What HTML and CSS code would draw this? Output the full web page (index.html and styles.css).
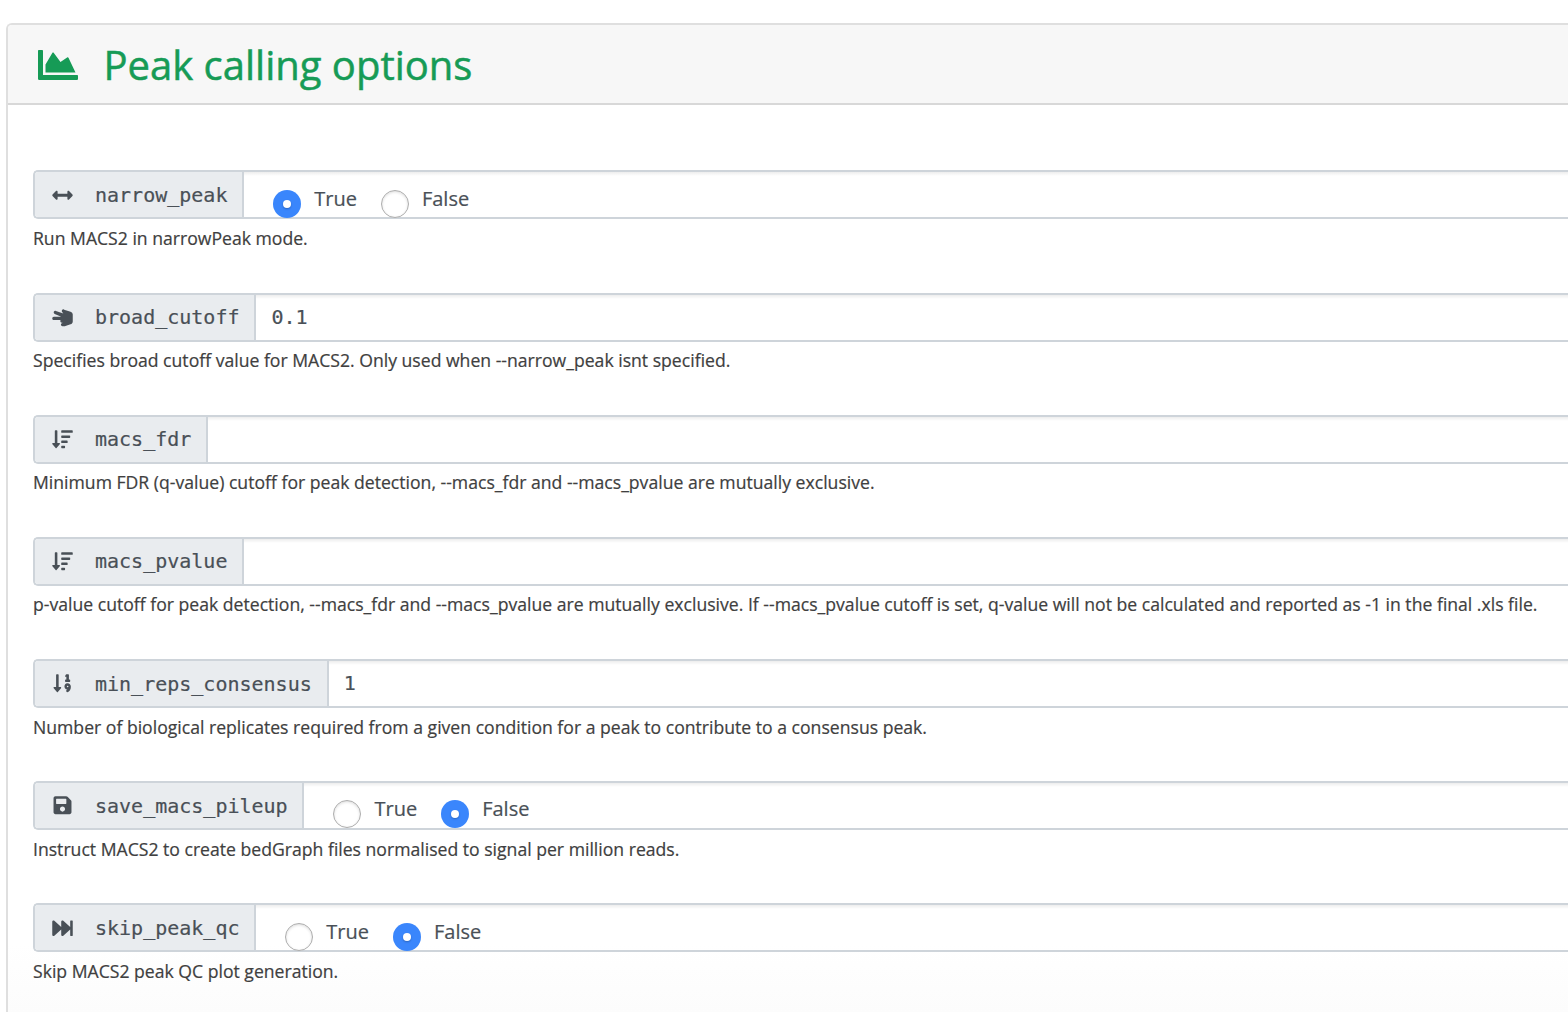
FILE: index.html
```html
<!DOCTYPE html>
<html lang="en">
<head>
<meta charset="utf-8">
<title>Peak calling options</title>
<link rel="stylesheet" href="styles.css">
</head>
<body>
<section class="card">
  <h2 class="card-header">
    <svg class="icon-title" viewBox="0 0 512 512"><path d="M500 384c6.6 0 12 5.4 12 12v40c0 6.6-5.4 12-12 12H12c-6.6 0-12-5.4-12-12V76c0-6.6 5.4-12 12-12h40c6.6 0 12 5.4 12 12v308h436zM372.7 159.5L288 216l-85.3-113.7c-5.1-6.8-15.5-6.3-19.9 1L96 248v104h384l-89.9-187.8c-3.2-6.5-11.4-8.7-17.4-4.7z"/></svg>
    <span>Peak calling options</span>
  </h2>
  <div class="card-body">
    <div class="form-group">
      <div class="input-group">
        <label class="addon"><svg class="icon" viewBox="0 0 512 512"><path d="M377.941 169.941V216H134.059v-46.059c0-21.382-25.851-32.09-40.971-16.971L7.029 239.029c-9.373 9.373-9.373 24.568 0 33.941l86.059 86.059c15.119 15.119 40.971 4.411 40.971-16.971V296h243.882v46.059c0 21.382 25.851 32.09 40.971 16.971l86.059-86.059c9.373-9.373 9.373-24.568 0-33.941l-86.059-86.059c-15.119-15.12-40.971-4.412-40.971 16.97z"/></svg><span>narrow_peak</span></label>
        <div class="control radios">
          <label class="radio"><i class="dot checked"></i><span>True</span></label>
          <label class="radio"><i class="dot"></i><span>False</span></label>
        </div>
      </div>
      <p class="help">Run MACS2 in narrowPeak mode.</p>
    </div>
    <div class="form-group">
      <div class="input-group">
        <label class="addon"><svg class="icon" viewBox="0 0 512 512"><path d="M216 440c0-22 18-40 40-40v-8h-16c-22 0-40-18-40-40 0-10 3-20 10-27H40c-22 0-40-18-40-40s18-40 40-40h172v-10L62 173c-21-8-31-31-23-52s31-31 52-23l186 64-30-38c-14-17-11-42 6-56s42-11 56 6l28 10 120 34c32 9 55 38 55 71v171c0 33-22 62-54 70l-130 45c-8 3-16 5-24 5h-48c-22 0-40-18-40-40z"/></svg><span>broad_cutoff</span></label>
        <div class="control value">0.1</div>
      </div>
      <p class="help">Specifies broad cutoff value for MACS2. Only used when --narrow_peak isnt specified.</p>
    </div>
    <div class="form-group">
      <div class="input-group">
        <label class="addon"><svg class="icon" viewBox="0 0 512 512"><path d="M304 416h-64a16 16 0 0 0-16 16v32a16 16 0 0 0 16 16h64a16 16 0 0 0 16-16v-32a16 16 0 0 0-16-16zm-128-64h-48V48a16 16 0 0 0-16-16H80a16 16 0 0 0-16 16v304H16c-14.19 0-21.37 17.24-11.29 27.31l80 96a16 16 0 0 0 22.62 0l80-96C197.35 369.26 190.22 352 176 352zm256-192H240a16 16 0 0 0-16 16v32a16 16 0 0 0 16 16h192a16 16 0 0 0 16-16v-32a16 16 0 0 0-16-16zm-64 128H240a16 16 0 0 0-16 16v32a16 16 0 0 0 16 16h128a16 16 0 0 0 16-16v-32a16 16 0 0 0-16-16zM496 32H240a16 16 0 0 0-16 16v32a16 16 0 0 0 16 16h256a16 16 0 0 0 16-16V48a16 16 0 0 0-16-16z"/></svg><span>macs_fdr</span></label>
        <div class="control value"></div>
      </div>
      <p class="help">Minimum FDR (q-value) cutoff for peak detection, --macs_fdr and --macs_pvalue are mutually exclusive.</p>
    </div>
    <div class="form-group">
      <div class="input-group">
        <label class="addon"><svg class="icon" viewBox="0 0 512 512"><path d="M304 416h-64a16 16 0 0 0-16 16v32a16 16 0 0 0 16 16h64a16 16 0 0 0 16-16v-32a16 16 0 0 0-16-16zm-128-64h-48V48a16 16 0 0 0-16-16H80a16 16 0 0 0-16 16v304H16c-14.19 0-21.37 17.24-11.29 27.31l80 96a16 16 0 0 0 22.62 0l80-96C197.35 369.26 190.22 352 176 352zm256-192H240a16 16 0 0 0-16 16v32a16 16 0 0 0 16 16h192a16 16 0 0 0 16-16v-32a16 16 0 0 0-16-16zm-64 128H240a16 16 0 0 0-16 16v32a16 16 0 0 0 16 16h128a16 16 0 0 0 16-16v-32a16 16 0 0 0-16-16zM496 32H240a16 16 0 0 0-16 16v32a16 16 0 0 0 16 16h256a16 16 0 0 0 16-16V48a16 16 0 0 0-16-16z"/></svg><span>macs_pvalue</span></label>
        <div class="control value"></div>
      </div>
      <p class="help">p-value cutoff for peak detection, --macs_fdr and --macs_pvalue are mutually exclusive. If --macs_pvalue cutoff is set, q-value will not be calculated and reported as -1 in the final .xls file.</p>
    </div>
    <div class="form-group">
      <div class="input-group">
        <label class="addon"><svg class="icon" viewBox="-32 0 512 512"><path d="M304 96h16v64h-16a16 16 0 0 0-16 16v32a16 16 0 0 0 16 16h96a16 16 0 0 0 16-16v-32a16 16 0 0 0-16-16h-16V48a16 16 0 0 0-16-16h-48a16 16 0 0 0-14.29 8.83l-16 32A16 16 0 0 0 304 96zm26.15 162.91a79 79 0 0 0-55 54.17c-14.25 51.05 21.21 97.77 68.85 102.53a84.07 84.07 0 0 1-20.85 12.91c-7.57 3.4-10.8 12.47-8.18 20.34l9.9 20c2.87 8.63 12.53 13.49 20.9 9.91 58-24.76 86.25-61.61 86.25-132V336c-.02-51.21-48.4-91.34-101.85-77.09zM352 356a20 20 0 1 1 20-20 20 20 0 0 1-20 20zM176 352h-48V48a16 16 0 0 0-16-16H80a16 16 0 0 0-16 16v304H16c-14.19 0-21.37 17.24-11.29 27.31l80 96a16 16 0 0 0 22.62 0l80-96C197.35 369.26 190.22 352 176 352z"/></svg><span>min_reps_consensus</span></label>
        <div class="control value">1</div>
      </div>
      <p class="help">Number of biological replicates required from a given condition for a peak to contribute to a consensus peak.</p>
    </div>
    <div class="form-group">
      <div class="input-group">
        <label class="addon"><svg class="icon" viewBox="-32 0 512 512"><path d="M433.941 129.941l-83.882-83.882A48 48 0 0 0 316.118 32H48C21.49 32 0 53.49 0 80v352c0 26.51 21.49 48 48 48h352c26.51 0 48-21.49 48-48V163.882a48 48 0 0 0-14.059-33.941zM224 416c-35.346 0-64-28.654-64-64 0-35.346 28.654-64 64-64s64 28.654 64 64c0 35.346-28.654 64-64 64zm96-304.52V212c0 6.627-5.373 12-12 12H76c-6.627 0-12-5.373-12-12V108c0-6.627 5.373-12 12-12h228.52c3.183 0 6.235 1.264 8.485 3.515l3.48 3.48A11.996 11.996 0 0 1 320 111.48z"/></svg><span>save_macs_pileup</span></label>
        <div class="control radios">
          <label class="radio"><i class="dot"></i><span>True</span></label>
          <label class="radio"><i class="dot checked"></i><span>False</span></label>
        </div>
      </div>
      <p class="help">Instruct MACS2 to create bedGraph files normalised to signal per million reads.</p>
    </div>
    <div class="form-group">
      <div class="input-group">
        <label class="addon"><svg class="icon" viewBox="0 0 512 512"><path d="M512 76v360c0 6.6-5.4 12-12 12h-40c-6.6 0-12-5.4-12-12V284.1L276.5 440.6c-20.6 17.2-52.5 2.8-52.5-24.6V284.1L52.5 440.6C31.9 457.8 0 443.4 0 416V96c0-27.4 31.9-41.7 52.5-24.6L224 226.8V96c0-27.4 31.9-41.7 52.5-24.6L448 226.8V76c0-6.6 5.4-12 12-12h40c6.6 0 12 5.4 12 12z"/></svg><span>skip_peak_qc</span></label>
        <div class="control radios">
          <label class="radio"><i class="dot"></i><span>True</span></label>
          <label class="radio"><i class="dot checked"></i><span>False</span></label>
        </div>
      </div>
      <p class="help">Skip MACS2 peak QC plot generation.</p>
    </div>
  </div>
</section>
</body>
</html>
```
FILE: styles.css
```css
* { box-sizing: border-box; }

body {
  margin: 0;
  padding: 23px 0 0 6px;
  height: 100vh;
  background: #fff;
  color: #404040;
  font-family: "Open Sans", "Noto Sans", sans-serif;
  -webkit-text-stroke: 0.2px;
}

.card {
  height: 100%;
  border: 2px solid #dfdfdf;
  border-width: 2px 0 0 2px;
  border-top-left-radius: 6px;
  background: linear-gradient(#fff 93%, #fcfcfc);
  overflow: hidden;
}

.card-header {
  display: flex;
  align-items: center;
  gap: 25.4px;
  height: 80px;
  margin: 0;
  padding: 0 30px;
  border-bottom: 2px solid #d8d8d8;
  background: #f7f7f7;
  color: #169b56;
  font-size: 40px;
  font-weight: 400;
  -webkit-text-stroke: 0.5px;
}

.icon-title {
  width: 40px;
  height: 40px;
  margin-top: 2px;
  fill: currentColor;
  stroke: none;
}

.card-body { padding: 65.4px 0 0 25px; }

.form-group { height: 122.17px; }

.form-group:last-child { height: auto; }

.input-group {
  display: flex;
  height: 49px;
  border: 2px solid #ced4da;
  border-right: 0;
  border-radius: 5px 0 0 5px;
}

.addon {
  display: flex;
  align-items: center;
  gap: 22px;
  padding: 0 14.8px 0 17px;
  border-right: 2px solid #ced4da;
  border-radius: 3px 0 0 3px;
  background: #e9ecef;
  color: #495057;
  font: 20px "DejaVu Sans Mono", monospace;
}

.icon {
  width: 21px;
  height: 20.5px;
  fill: currentColor;
}

.control {
  flex: 1;
  background: linear-gradient(rgba(0, 0, 0, 0.07), transparent 4px);
  color: #495057;
  font-size: 20px;
}

.value {
  padding: 0.45px 15.2px 0;
  font-family: "DejaVu Sans Mono", monospace;
  line-height: 44.5px;
}

.radios {
  display: flex;
  gap: 24px;
  padding-left: 29px;
}

.radio {
  display: flex;
  gap: 13px;
  height: 45px;
  line-height: 52.6px;
}

.radio span { padding-top: 0.2px; }

.dot {
  display: grid;
  place-items: center;
  width: 28px;
  height: 28px;
  margin-top: 17.2px;
  border: 1px solid #adadad;
  border-radius: 50%;
  background: #fff;
  box-shadow: inset 0 1px 3px rgba(0, 0, 0, 0.15);
}

.checked {
  border: 0;
  background: #3a86fc;
  box-shadow: none;
}

.checked::after {
  content: "";
  width: 8px;
  height: 8px;
  border-radius: 50%;
  background: #fff;
  box-shadow: 0 1px 2px rgba(0, 0, 0, 0.25);
}

.help {
  margin: 5.5px 0 0;
  font-size: 17.63px;
  line-height: 26px;
  white-space: nowrap;
}
```
